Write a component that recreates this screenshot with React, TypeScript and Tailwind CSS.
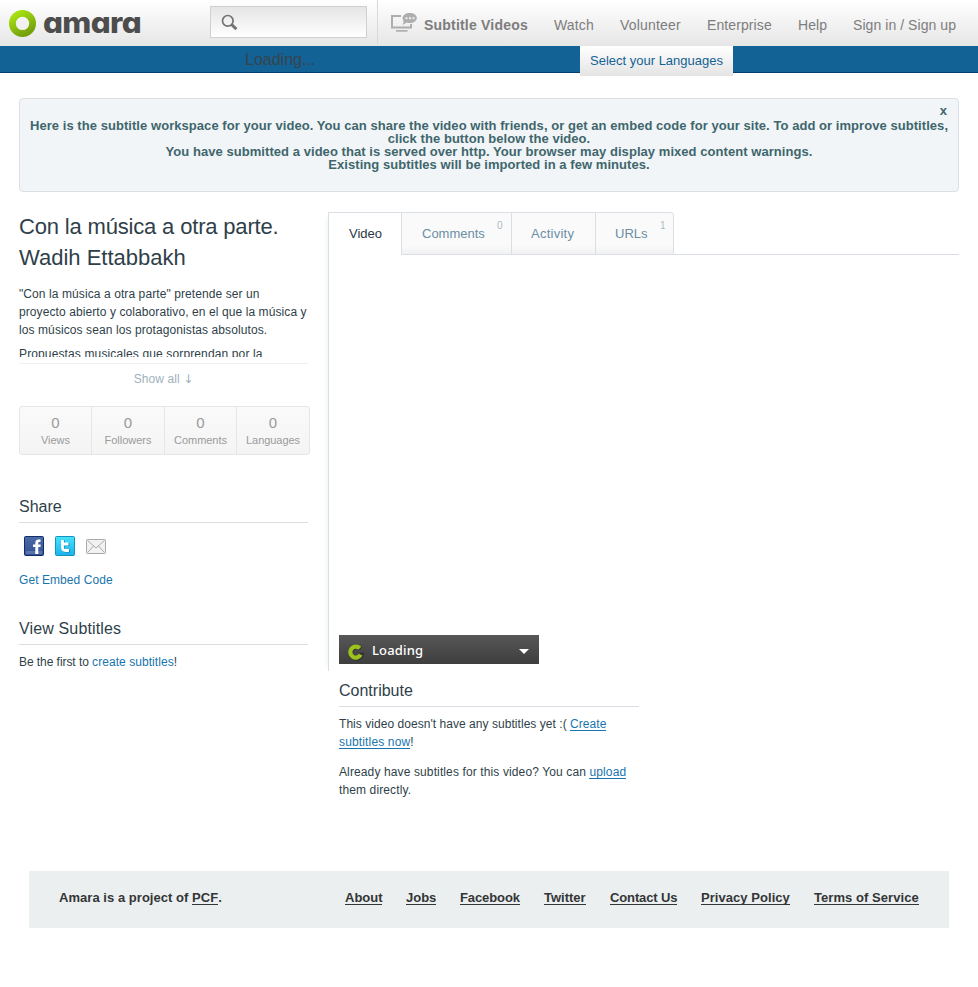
import React from "react";

const navItems = [
  { label: "Watch", box: "w-[66px] tracking-[0.15px]" },
  { label: "Volunteer", box: "w-[87px] tracking-[0.2px]" },
  { label: "Enterprise", box: "w-[91px] tracking-[0.1px]" },
  { label: "Help", box: "w-[55px] tracking-[0.1px]" },
  { label: "Sign in / Sign up", box: "w-[116px] tracking-[0.06px]" },
];

const stats = [
  { label: "Views", box: "w-[72px]" },
  { label: "Followers", box: "w-[73px]" },
  { label: "Comments", box: "w-[72px] tracking-[-0.05px]" },
  { label: "Languages", box: "w-[72px] tracking-[-0.05px]" },
];

const footerLinks = [
  { label: "About", box: "w-[37px]" },
  { label: "Jobs", box: "w-[30px]" },
  { label: "Facebook", box: "w-[60px] tracking-[-0.1px]" },
  { label: "Twitter", box: "w-[42px]" },
  { label: "Contact Us", box: "w-[67px] tracking-[-0.12px]" },
  { label: "Privacy Policy", box: "w-[89px] tracking-[0.05px]" },
  { label: "Terms of Service", box: "w-[105px] tracking-[0.06px]" },
];

function Ring() {
  return (
    <svg width="28" height="28" viewBox="0 0 28 28" className="block shrink-0">
      <defs>
        <linearGradient id="ring" x1="0.2" y1="0" x2="0.75" y2="1">
          <stop offset="0" stopColor="#a6e012" />
          <stop offset="1" stopColor="#74a00c" />
        </linearGradient>
      </defs>
      <circle cx="13.5" cy="13.4" r="10.1" fill="none" stroke="url(#ring)" strokeWidth="6.8" />
    </svg>
  );
}

function Header() {
  return (
    <header className="flex h-[46px] bg-linear-to-b from-white to-[#e6e6e6] text-sm leading-5 text-[#7d7d7d]">
      <div className="flex w-[210px] pt-[10px] pl-[9px]">
        <Ring />
        <span className="-mt-[4px] ml-[6px] h-[34px] origin-left scale-x-[1.08] font-['Inter'] text-[29px] leading-[34px] font-extrabold tracking-[-0.6px] text-[#4d4d4d] [font-feature-settings:'cv11'] [font-optical-sizing:none]">
          amara
        </span>
      </div>
      <div className="mt-1.5 h-8 w-[157px] border border-[#d0d0d0] bg-linear-to-b from-[#e5e5e5] to-white">
        <svg width="18" height="18" viewBox="0 0 18 18" className="mt-[7px] ml-[10px]">
          <circle cx="6.8" cy="6.8" r="5.3" fill="none" stroke="#737373" strokeWidth="1.7" />
          <path d="M10.5 10.5l4.9 4.7" stroke="#737373" strokeWidth="3" />
        </svg>
      </div>
      <div className="ml-[10px] flex h-[44px] border-l border-[#d9d9d9] pt-[15px]">
        <svg width="27" height="20" viewBox="0 0 27 20" className="-mt-[3px] ml-[13px]" fill="#aeaeae">
          <path d="M10 4H1v11.5h19v-3.500" fill="none" stroke="#aeaeae" strokeWidth="2" />
          <rect x="5" y="18" width="11.5" height="1.7" />
          <path d="M18.8 1c4 0 7 2.1 7 5s-3 5-7 5c-1 0-2-.1-3-.5L11.700 13l1-3.400C12 8.600 11.600 7.200 11.600 6c0-2.900 3.200-5 7.200-5z" />
          <g fill="#eee">
            <rect x="14.500" y="5.200" width="2" height="2" />
            <rect x="18" y="5.200" width="2" height="2" />
            <rect x="21.500" y="5.200" width="2" height="2" />
          </g>
        </svg>
        <span className="ml-[6px] w-[117px] font-bold tracking-[0.2px] whitespace-nowrap">Subtitle Videos</span>
        {navItems.map((item) => (
          <span key={item.label} className={item.box + " pl-[13px] whitespace-nowrap"}>
            {item.label}
          </span>
        ))}
      </div>
    </header>
  );
}

function LanguageBar() {
  return (
    <div className="flex h-[27px] border-b border-[#04406c] bg-[#136295]">
      <div className="ml-[245px] w-[335px] text-base leading-[27px] text-[#37444d]">Loading...</div>
      <div className="h-[30px] w-[153px] bg-linear-to-b from-white to-[#e4e4e4] pl-[10px] text-[13px] leading-[29px] whitespace-nowrap text-[#136295]">
        Select your Languages
      </div>
    </div>
  );
}

function Notice() {
  return (
    <div className="mx-[19px] mt-[25px] h-[94px] rounded border border-[#dbe0e4] bg-[#f1f5f8] text-center text-[13px] leading-[13px] font-bold text-[#40666c]">
      <div className="mt-[5px] pr-[11px] text-right">x</div>
      <div className="mt-[2px] tracking-[0.053px] whitespace-nowrap">
        Here is the subtitle workspace for your video. You can share the video with friends, or get an embed code for your site. To add or improve subtitles,
        <br />
        click the button below the video.
        <br />
        You have submitted a video that is served over http. Your browser may display mixed content warnings.
        <br />
        Existing subtitles will be imported in a few minutes.
      </div>
    </div>
  );
}

function ShareIcons() {
  return (
    <div className="mt-[13px] ml-[5px] flex h-5 gap-[11px]">
      <svg width="20" height="20" viewBox="0 0 20 20">
        <defs>
          <linearGradient id="fb" x1="0" y1="0" x2="0" y2="1">
            <stop offset="0" stopColor="#4c6bab" />
            <stop offset="1" stopColor="#32518f" />
          </linearGradient>
        </defs>
        <rect x=".5" y=".5" width="19" height="19" rx="1" fill="url(#fb)" stroke="#122e69" />
        <rect x="2" y="15" width="16" height="3" fill="#5a75ad" />
        <path d="M16.500 3.500h-2c-2.300 0-3.200 1.400-3.200 3.500v1.500H9V11h2.300v7h3v-7h2.200l.2-2.500h-2.400V7c0-.8.400-1.100 1.100-1.100h1.100z" fill="#fff" />
      </svg>
      <svg width="20" height="20" viewBox="0 0 20 20">
        <defs>
          <linearGradient id="tw" x1="0" y1="0" x2="0" y2="1">
            <stop offset="0" stopColor="#46e3fb" />
            <stop offset="1" stopColor="#1cb1ee" />
          </linearGradient>
        </defs>
        <rect x=".5" y=".5" width="19" height="19" rx="1" fill="url(#tw)" stroke="#1593bd" />
        <path d="M8.300 4.500v7.500c0 2 .8 3 3 3h3.700M8.500 8.500h5.800" fill="none" stroke="#1687a8" strokeWidth="3" />
        <path d="M7.500 4v7.500c0 2 .8 3 3 3h3.500M7.500 8h6" fill="none" stroke="#fff" strokeWidth="2.800" />
      </svg>
      <svg width="20" height="20" viewBox="0 0 20 20">
        <rect x=".5" y="3.500" width="19" height="14" rx="1" fill="#f2f2f2" stroke="#aaa" />
        <path d="M1.500 4.500L10 12l8.500-7.500M1.500 16.500L7.500 10M18.500 16.500L12.500 10" fill="none" stroke="#aaa" />
      </svg>
    </div>
  );
}

function Sidebar() {
  return (
    <aside className="w-[309px] shrink-0 text-xs leading-[18px]">
      <h1 className="-mt-px text-[22px] leading-[31px] whitespace-nowrap">
        <span className="tracking-[-0.17px]">Con la música a otra parte.</span>
        <br />
        Wadih Ettabbakh
      </h1>
      <div className="mt-3 h-[72px] w-[289px] overflow-hidden tracking-[0.09px] whitespace-nowrap">
        <p>
          "Con la música a otra parte" pretende ser un
          <br />
          proyecto abierto y colaborativo, en el que la música y
          <br />
          los músicos sean los protagonistas absolutos.
        </p>
        <p className="mt-1.5 tracking-[0.13px]">Propuestas musicales que sorprendan por la</p>
      </div>
      <div className="mt-[6px] w-[289px] border-t border-[#efefef] pt-[6px] text-center tracking-[0.1px] text-[#9fb1bd]">
        Show all <span className="font-['DejaVu_Sans']">↓</span>
      </div>
      <div className="mt-[18px] flex h-[49px] w-[291px] rounded-[3px] border border-[#e6e6e6] bg-linear-to-b from-[#fafafa] to-[#f4f4f4] text-center text-[#9a9a9a]">
        {stats.map((stat) => (
          <div key={stat.label} className={stat.box + " border-r border-[#e6e6e6] pt-[7px] last:border-r-0"}>
            <div className="text-[15px] leading-[18px]">0</div>
            <div className="text-[11px] leading-4">{stat.label}</div>
          </div>
        ))}
      </div>
      <h2 className="mt-[41px] h-[27px] w-[289px] border-b border-[#dcdfe1] text-base leading-[21px]">Share</h2>
      <ShareIcons />
      <div className="mt-[15px] tracking-[0.07px] text-[#1775ae]">Get Embed Code</div>
      <h2 className="mt-[29px] h-[27px] w-[289px] border-b border-[#dcdfe1] text-base leading-[21px] tracking-[0.14px]">View Subtitles</h2>
      <p className="mt-2">
        <span className="tracking-[-0.06px]">Be the first to </span>
        <a className="tracking-[0.06px] text-[#1775ae]">create subtitles</a>!
      </p>
    </aside>
  );
}

function Tabs() {
  return (
    <div className="flex h-[43px] text-[13px] leading-[42px] text-[#6b8ea5]">
      <div className="w-[72px] border-t border-[#d9dfe4] pl-[20px] text-[#2b3843]">Video</div>
      <div className="flex w-[273px] rounded-tr-[3px] border border-[#d9dfe4] bg-linear-to-b from-[#fafafa] from-80% to-[#f1f1f1]">
        <div className="flex w-[109px] pl-[20px]">
          <span className="w-[75px]">Comments</span>
          <span className="text-[10px] leading-[26px] text-[#a9bbc7]">0</span>
        </div>
        <div className="w-[84px] border-l border-[#d9dfe4] pl-[19px] tracking-[0.25px]">Activity</div>
        <div className="flex w-[78px] border-l border-[#d9dfe4] pl-[19px]">
          <span className="w-[45px]">URLs</span>
          <span className="text-[10px] leading-[26px] text-[#a9bbc7]">1</span>
        </div>
      </div>
      <div className="flex-1 border-b border-[#d9dfe4]" />
    </div>
  );
}

function Underlined({ children }: { children: React.ReactNode }) {
  return <a className="inline-block h-[16px] border-b border-[#1775ae] align-top leading-[18px] text-[#1775ae]">{children}</a>;
}

function Main() {
  return (
    <main className="w-[631px]">
      <div className="h-[459px] border-l border-[#d9dfe4] shadow-[-6px_0_5px_-5px_#eef1f3]">
        <Tabs />
        <div className="mt-[380px] ml-[10px] flex h-[29px] w-[200px] items-center bg-linear-to-b from-[#575757] to-[#3e3e3e]">
          <svg width="17" height="17" viewBox="0 0 17 17" className="mt-[5px] ml-[8px]">
            <path d="M12.500 4.300A5.600 5.600 0 1 0 14 8" transform="translate(1.100 .6)" fill="none" stroke="#303030" strokeWidth="4.600" />
            <path d="M12.800 4.300A5.500 5.500 0 1 0 13.700 10.600" fill="none" stroke="#9cc31d" strokeWidth="4.200" />
          </svg>
          <span className="ml-[8px] w-[147px] font-['Noto_Sans'] text-[13px] leading-5 font-medium tracking-[0.15px] text-white">Loading</span>
          <span className="mt-[4px] border-x-5 border-t-5 border-x-transparent border-t-white" />
        </div>
      </div>
      <section className="ml-[11px] w-[300px] text-xs leading-[18px] whitespace-nowrap">
        <h2 className="mt-[9px] h-[27px] border-b border-[#d9dfe4] text-base leading-[21px]">Contribute</h2>
        <p className="mt-2 h-9 tracking-[0.045px]">
          This video doesn't have any subtitles yet :( <Underlined>Create</Underlined>
          <br />
          <span className="tracking-[0.15px]">
            <Underlined>subtitles now</Underlined>!
          </span>
        </p>
        <p className="mt-3 h-9 tracking-[0.12px]">
          Already have subtitles for this video? You can <Underlined>upload</Underlined>
          <br />
          them directly.
        </p>
      </section>
    </main>
  );
}

function Footer() {
  return (
    <footer className="mx-[29px] mt-[72px] flex h-[57px] justify-between bg-[#ebeff0] px-[30px] pt-[20px] text-[13px] leading-[14px] font-bold whitespace-nowrap text-[#333536]">
      <div className="tracking-[0.04px]">
        Amara is a project of <a className="inline-block h-[14px] border-b border-[#333536] align-top">PCF</a>.
      </div>
      <nav className="flex gap-6">
        {footerLinks.map((link) => (
          <a key={link.label} className={link.box + " h-[14px] border-b border-[#333536]"}>
            {link.label}
          </a>
        ))}
      </nav>
    </footer>
  );
}

export default function App() {
  return (
    <div className="h-[987px] w-[978px] overflow-hidden bg-white font-['Liberation_Sans',Arial,sans-serif] text-[#2f3f4a]">
      <Header />
      <LanguageBar />
      <Notice />
      <div className="mt-5 ml-[19px] flex">
        <Sidebar />
        <Main />
      </div>
      <Footer />
    </div>
  );
}
